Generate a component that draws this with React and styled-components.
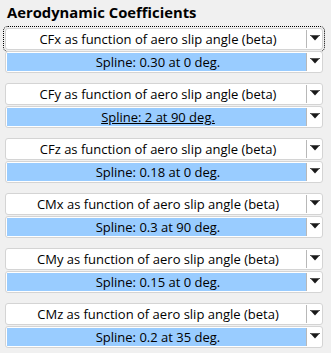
import React from "react";
import styled, { createGlobalStyle } from "styled-components";

const Global = createGlobalStyle`
  html, body { margin: 0; padding: 0; background: #f0f0f0; }
  body { font-family: "Open Sans", "Noto Sans", sans-serif; color: #000; }
`;

const Panel = styled.div`
  width: 331px;
  height: 353px;
  background: #f0f0f0;
  box-sizing: border-box;
  padding: 1px 0 0 5px;
`;

const Title = styled.div`
  font-family: "Open Sans", sans-serif;
  font-weight: 700;
  font-size: 14.8px;
  line-height: 22px;
  padding-left: 2px;
  margin-bottom: 5px;
`;

const List = styled.div`
  display: flex;
  flex-direction: column;
  gap: 10px;
  width: 318px;
`;

const Group = styled.div`
  display: flex;
  flex-direction: column;
  gap: 1px;
`;

const Combo = styled.div`
  position: relative;
  display: flex;
  height: 22px;
  box-sizing: border-box;
  border: 1px solid #d4d4d4;
  border-radius: 3px;
  background: #fff;
  ${(p) =>
    p.$focus &&
    `outline: 1px dotted #000; outline-offset: 1px;`}
`;

const Field = styled.div`
  flex: 1;
  display: flex;
  align-items: center;
  justify-content: center;
  margin: 1px 0 1px 1px;
  padding-left: 3px;
  background: ${(p) => (p.$selected ? "#99ccff" : "#fff")};
  font-size: 13px;
  text-decoration: ${(p) => (p.$underline ? "underline" : "none")};
  white-space: nowrap;
`;

const Button = styled.div`
  width: 16px;
  display: flex;
  align-items: center;
  justify-content: center;
  border-left: 1px solid #b8b8b8;
  margin: 1px 0;
  padding-bottom: 2px;
  box-sizing: border-box;
`;

const Arrow = () => (
  <svg width="10" height="6" viewBox="0 0 10 6">
    <polygon points="0,0 10,0 5,5.5" fill="#1a1a1a" />
    <rect x="0" y="0" width="10" height="1" fill="#555" />
  </svg>
);

const rows = [
  ["CFx", "Spline: 0.30 at 0 deg.", false],
  ["CFy", "Spline: 2 at 90 deg.", true],
  ["CFz", "Spline: 0.18 at 0 deg.", false],
  ["CMx", "Spline: 0.3 at 90 deg.", false],
  ["CMy", "Spline: 0.15 at 0 deg.", false],
  ["CMz", "Spline: 0.2 at 35 deg.", false],
];

export default function App() {
  return (
    <>
      <Global />
      <Panel>
        <Title>Aerodynamic Coefficients</Title>
        <List>
          {rows.map(([name, value, underline], i) => (
            <Group key={name}>
              <Combo $focus={i === 0}>
                <Field>{name} as function of aero slip angle (beta)</Field>
                <Button>
                  <Arrow />
                </Button>
              </Combo>
              <Combo>
                <Field $selected $underline={underline}>
                  {value}
                </Field>
                <Button>
                  <Arrow />
                </Button>
              </Combo>
            </Group>
          ))}
        </List>
      </Panel>
    </>
  );
}
